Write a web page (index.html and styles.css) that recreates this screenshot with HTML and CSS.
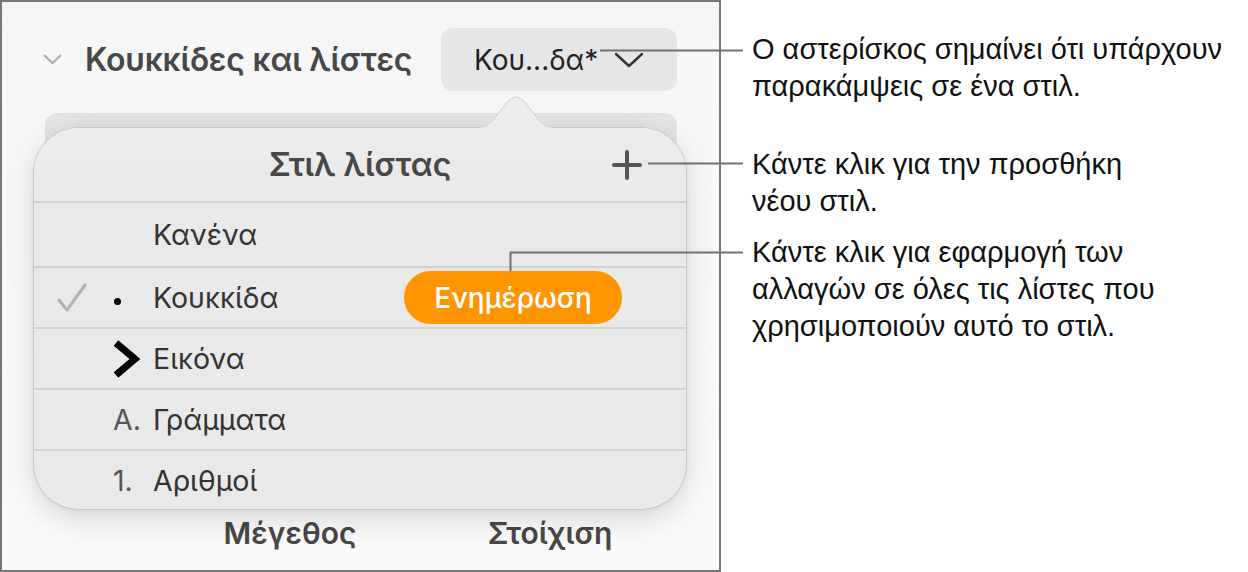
FILE: index.html
```html
<!DOCTYPE html>
<html lang="el">
<head>
    <meta charset="UTF-8">
    <meta name="viewport" content="width=device-width, initial-scale=1.0">
    <title>Στιλ λίστας</title>
    <link rel="stylesheet" href="styles.css">
</head>
<body>
    <div class="page">
        <div class="shot">
            <div class="section-head">
                <svg class="disclosure" width="19" height="11" viewBox="0 0 19 11"><path d="M1.5 1.5 L9.5 9 L17.5 1.5" fill="none" stroke="#ababab" stroke-width="2" stroke-linecap="round" stroke-linejoin="round"/></svg>
                <h2 class="section-title">Κουκκίδες και λίστες</h2>
                <button class="style-menu">
                    <span>Κου...δα*</span>
                    <svg width="30" height="16" viewBox="0 0 30 16"><path d="M2 2 L15 14 L28 2" fill="none" stroke="#333" stroke-width="2.4" stroke-linecap="round" stroke-linejoin="round"/></svg>
                </button>
            </div>
            <div class="field"></div>

            <div class="footer">
                <span>Μέγεθος</span>
                <span>Στοίχιση</span>
            </div>

            <!-- Αναδυόμενο μενού στιλ λίστας -->
            <div class="popover">
                <svg class="popover-tip" width="72" height="33" viewBox="0 0 72 33">
                    <path d="M0 31 C 16 31, 24 1, 36 1 C 48 1, 56 31, 72 31 L72 33 L0 33 Z" fill="#ececec"/>
                    <path d="M0 31 C 16 31, 24 1, 36 1 C 48 1, 56 31, 72 31" fill="none" stroke="#cfcfcf" stroke-width="1"/>
                </svg>
                <div class="popover-title">
                    Στιλ λίστας
                    <svg class="add" width="32" height="32" viewBox="0 0 32 32"><path d="M16 3 V29 M3 16 H29" stroke="#555" stroke-width="4" stroke-linecap="round"/></svg>
                </div>
                <div class="row first">
                    <span class="check"></span>
                    <span class="marker"></span>
                    <span class="label">Κανένα</span>
                </div>
                <div class="row">
                    <span class="check">
                        <svg width="30" height="30" viewBox="0 0 30 30"><path d="M2 17 L10 27 L28 2" fill="none" stroke="#b1b1b1" stroke-width="3" stroke-linecap="round" stroke-linejoin="round"/></svg>
                    </span>
                    <span class="marker"><i class="dot"></i></span>
                    <span class="label">Κουκκίδα</span>
                    <button class="update">Ενημέρωση</button>
                </div>
                <div class="row">
                    <span class="check"></span>
                    <span class="marker">
                        <svg width="28" height="38" viewBox="0 0 28 38"><path d="M3 3 L22 19 L3 35" fill="none" stroke="#000" stroke-width="7"/></svg>
                    </span>
                    <span class="label">Εικόνα</span>
                </div>
                <div class="row">
                    <span class="check"></span>
                    <span class="marker text">A.</span>
                    <span class="label">Γράμματα</span>
                </div>
                <div class="row">
                    <span class="check"></span>
                    <span class="marker text">1.</span>
                    <span class="label">Αριθμοί</span>
                </div>
            </div>
        </div>

        <div class="notes">
            <p class="note note-star">Ο αστερίσκος σημαίνει ότι υπάρχουν<br>παρακάμψεις σε ένα στιλ.</p>
            <p class="note note-add">Κάντε κλικ για την προσθήκη<br>νέου στιλ.</p>
            <p class="note note-update">Κάντε κλικ για εφαρμογή των<br>αλλαγών σε όλες τις λίστες που<br>χρησιμοποιούν αυτό το στιλ.</p>
        </div>

        <!-- γραμμές επισήμανσης -->
        <svg class="leaders" width="1248" height="572" viewBox="0 0 1248 572">
            <path d="M600 50.5 H743 M648 163.5 H743 M510.5 271 V252.5 H743" fill="none" stroke="#707070" stroke-width="2"/>
        </svg>
    </div>
</body>
</html>
```

FILE: styles.css
```css
* {
    margin: 0;
    padding: 0;
    box-sizing: border-box;
}

body {
    background: #ffffff;
    font-family: 'Inter', 'Noto Sans', sans-serif;
    color: #333;
}

.page {
    position: relative;
    display: flex;
    width: 1248px;
    height: 572px;
}

/* Παράθυρο με το πλαίσιο μορφοποίησης */
.shot {
    position: relative;
    display: flex;
    flex-direction: column;
    width: 721px;
    height: 572px;
    border: 2px solid #767676;
    background: linear-gradient(180deg, #f6f6f6 0%, #fafafa 100%);
}

.section-head {
    display: flex;
    align-items: center;
    padding: 26px 42px 0 41px;
}

.disclosure {
    margin-right: 23px;
}

.section-title {
    font-size: 32px;
    font-weight: 600;
    color: #474747;
    letter-spacing: -0.2px;
}

.style-menu {
    display: flex;
    align-items: center;
    gap: 16px;
    margin-left: auto;
    width: 236px;
    height: 63px;
    padding-left: 33px;
    border: none;
    border-radius: 12px;
    background: #e6e6e6;
    font-family: inherit;
    font-size: 28px;
    color: #222;
}

.field {
    margin: 22px 42px 0 43px;
    height: 60px;
    border-radius: 12px;
    background: #e3e3e3;
}

.footer {
    display: grid;
    grid-template-columns: 260px 260px;
    margin-top: auto;
    padding: 0 0 20px 158px;
    font-size: 30px;
    font-weight: 600;
    line-height: 34px;
    color: #474747;
    text-align: center;
}

.popover {
    position: absolute;
    left: 31px;
    top: 125px;
    width: 654px;
    height: 383px;
    border: 1px solid #c6c6c6;
    border-radius: 46px;
    background: #e9e9e9;
    box-shadow: 0 10px 30px rgba(0, 0, 0, 0.13), 0 2px 6px rgba(0, 0, 0, 0.06);
}

.popover-tip {
    position: absolute;
    left: 446px;
    top: -32px;
}

.popover-title {
    position: relative;
    display: flex;
    align-items: center;
    justify-content: center;
    height: 73px;
    font-size: 32px;
    font-weight: 600;
    color: #474747;
    background: linear-gradient(180deg, #ececec 0%, #e9e9e9 100%);
    border-radius: 45px 45px 0 0;
}

.popover-title .add {
    position: absolute;
    right: 43px;
    top: 21px;
}

.row {
    display: grid;
    grid-template-columns: 56px 40px 251px auto;
    align-items: center;
    height: 61px;
    padding-left: 23px;
    border-top: 2px solid #d2d2d2;
    font-size: 28.5px;
    color: #333;
}

.row.first {
    height: 65px;
}

.check {
    display: flex;
    align-items: center;
}

.marker {
    display: flex;
    align-items: center;
}

.marker.text {
    color: #555;
}

.dot {
    display: block;
    width: 7px;
    height: 7px;
    margin: 8px 0 0 1px;
    border-radius: 50%;
    background: #000;
}

.update {
    width: 218px;
    height: 53px;
    border: none;
    border-radius: 27px;
    background: #ff9500;
    color: #fff;
    font-family: inherit;
    font-size: 28px;
    font-weight: 500;
}

/* Επεξηγήσεις δεξιά */
.notes {
    padding-left: 31px;
    font-family: 'Liberation Sans', Arial, sans-serif;
    font-size: 29px;
    line-height: 37px;
    color: #111;
    white-space: nowrap;
}

.note-star {
    margin-top: 31px;
}

.note-add {
    margin-top: 41px;
}

.note-update {
    margin-top: 14px;
}

.leaders {
    position: absolute;
    left: 0;
    top: 0;
    pointer-events: none;
}
```
